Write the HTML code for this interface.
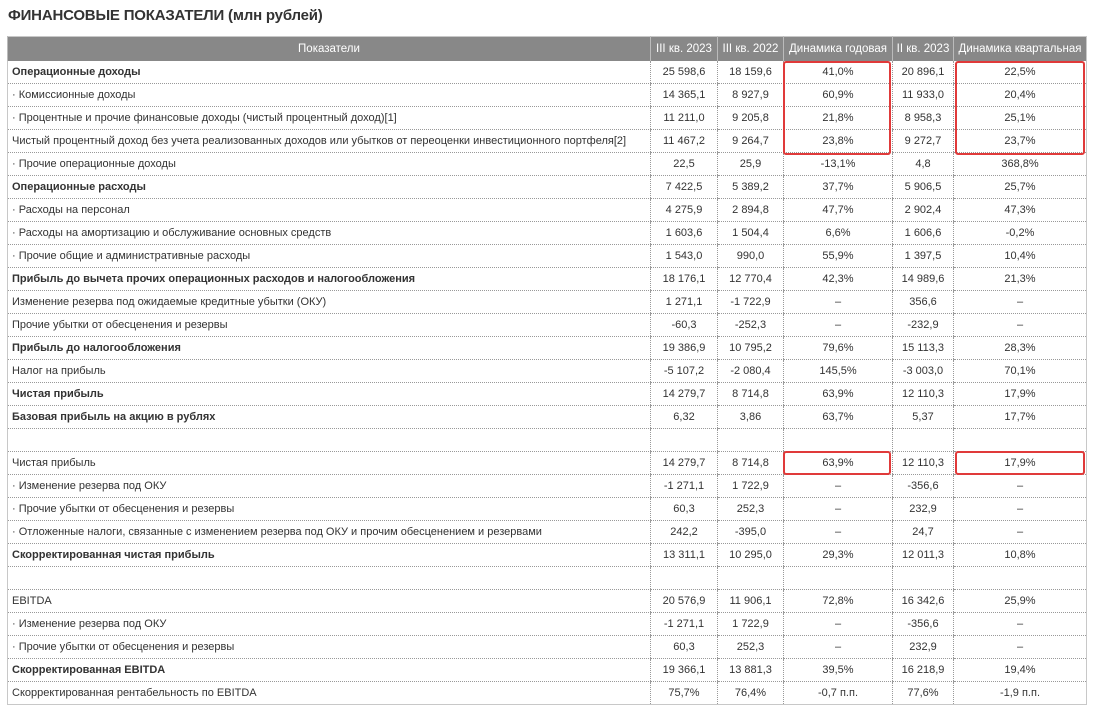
<!DOCTYPE html>
<html><head><meta charset="utf-8"><style>
body{margin:0;background:#fff;font-family:"Liberation Sans",Arial,sans-serif;color:#333;width:1095px;height:714px;position:relative;overflow:hidden}
h1{position:absolute;left:8px;top:7px;margin:0;font-size:15px;font-weight:bold;color:#333;letter-spacing:-0.2px}
table{position:absolute;left:7px;top:36px;border-collapse:collapse;table-layout:fixed;width:1079px;font-size:11px;border:1px solid #c8c8c8}
th{background:#888;color:#fff;font-weight:normal;height:24px;padding:0;border-left:1px solid #bbb;font-size:11.5px}
td{height:22px;padding:0 4px;border-bottom:1px dotted #999;border-left:1px dotted #999;text-align:center;white-space:nowrap;overflow:hidden}
td:first-child{text-align:left;border-left:none}
tr.b td:first-child{font-weight:bold}
.box{position:absolute;border:2px solid #e03a3a;border-radius:3px}
</style></head><body>
<h1>ФИНАНСОВЫЕ ПОКАЗАТЕЛИ (млн рублей)</h1>
<table>
<colgroup><col style="width:643px"><col style="width:67px"><col style="width:66px"><col style="width:109px"><col style="width:61px"><col style="width:133px"></colgroup>
<tr><th>Показатели</th><th>III кв. 2023</th><th>III кв. 2022</th><th>Динамика годовая</th><th>II кв. 2023</th><th>Динамика квартальная</th></tr>
<tr class="b"><td>Операционные доходы</td><td>25 598,6</td><td>18 159,6</td><td>41,0%</td><td>20 896,1</td><td>22,5%</td></tr>
<tr><td>· Комиссионные доходы</td><td>14 365,1</td><td>8 927,9</td><td>60,9%</td><td>11 933,0</td><td>20,4%</td></tr>
<tr><td>· Процентные и прочие финансовые доходы (чистый процентный доход)[1]</td><td>11 211,0</td><td>9 205,8</td><td>21,8%</td><td>8 958,3</td><td>25,1%</td></tr>
<tr><td>Чистый процентный доход без учета реализованных доходов или убытков от переоценки инвестиционного портфеля[2]</td><td>11 467,2</td><td>9 264,7</td><td>23,8%</td><td>9 272,7</td><td>23,7%</td></tr>
<tr><td>· Прочие операционные доходы</td><td>22,5</td><td>25,9</td><td>-13,1%</td><td>4,8</td><td>368,8%</td></tr>
<tr class="b"><td>Операционные расходы</td><td>7 422,5</td><td>5 389,2</td><td>37,7%</td><td>5 906,5</td><td>25,7%</td></tr>
<tr><td>· Расходы на персонал</td><td>4 275,9</td><td>2 894,8</td><td>47,7%</td><td>2 902,4</td><td>47,3%</td></tr>
<tr><td>· Расходы на амортизацию и обслуживание основных средств</td><td>1 603,6</td><td>1 504,4</td><td>6,6%</td><td>1 606,6</td><td>-0,2%</td></tr>
<tr><td>· Прочие общие и административные расходы</td><td>1 543,0</td><td>990,0</td><td>55,9%</td><td>1 397,5</td><td>10,4%</td></tr>
<tr class="b"><td>Прибыль до вычета прочих операционных расходов и налогообложения</td><td>18 176,1</td><td>12 770,4</td><td>42,3%</td><td>14 989,6</td><td>21,3%</td></tr>
<tr><td>Изменение резерва под ожидаемые кредитные убытки (ОКУ)</td><td>1 271,1</td><td>-1 722,9</td><td>–</td><td>356,6</td><td>–</td></tr>
<tr><td>Прочие убытки от обесценения и резервы</td><td>-60,3</td><td>-252,3</td><td>–</td><td>-232,9</td><td>–</td></tr>
<tr class="b"><td>Прибыль до налогообложения</td><td>19 386,9</td><td>10 795,2</td><td>79,6%</td><td>15 113,3</td><td>28,3%</td></tr>
<tr><td>Налог на прибыль</td><td>-5 107,2</td><td>-2 080,4</td><td>145,5%</td><td>-3 003,0</td><td>70,1%</td></tr>
<tr class="b"><td>Чистая прибыль</td><td>14 279,7</td><td>8 714,8</td><td>63,9%</td><td>12 110,3</td><td>17,9%</td></tr>
<tr class="b"><td>Базовая прибыль на акцию в рублях</td><td>6,32</td><td>3,86</td><td>63,7%</td><td>5,37</td><td>17,7%</td></tr>
<tr><td></td><td></td><td></td><td></td><td></td><td></td></tr>
<tr><td>Чистая прибыль</td><td>14 279,7</td><td>8 714,8</td><td>63,9%</td><td>12 110,3</td><td>17,9%</td></tr>
<tr><td>· Изменение резерва под ОКУ</td><td>-1 271,1</td><td>1 722,9</td><td>–</td><td>-356,6</td><td>–</td></tr>
<tr><td>· Прочие убытки от обесценения и резервы</td><td>60,3</td><td>252,3</td><td>–</td><td>232,9</td><td>–</td></tr>
<tr><td>· Отложенные налоги, связанные с изменением резерва под ОКУ и прочим обесценением и резервами</td><td>242,2</td><td>-395,0</td><td>–</td><td>24,7</td><td>–</td></tr>
<tr class="b"><td>Скорректированная чистая прибыль</td><td>13 311,1</td><td>10 295,0</td><td>29,3%</td><td>12 011,3</td><td>10,8%</td></tr>
<tr><td></td><td></td><td></td><td></td><td></td><td></td></tr>
<tr><td>EBITDA</td><td>20 576,9</td><td>11 906,1</td><td>72,8%</td><td>16 342,6</td><td>25,9%</td></tr>
<tr><td>· Изменение резерва под ОКУ</td><td>-1 271,1</td><td>1 722,9</td><td>–</td><td>-356,6</td><td>–</td></tr>
<tr><td>· Прочие убытки от обесценения и резервы</td><td>60,3</td><td>252,3</td><td>–</td><td>232,9</td><td>–</td></tr>
<tr class="b"><td>Скорректированная EBITDA</td><td>19 366,1</td><td>13 881,3</td><td>39,5%</td><td>16 218,9</td><td>19,4%</td></tr>
<tr><td>Скорректированная рентабельность по EBITDA</td><td>75,7%</td><td>76,4%</td><td>-0,7 п.п.</td><td>77,6%</td><td>-1,9 п.п.</td></tr>
</table>
<div class="box" style="left:783px;top:61px;width:104px;height:90px"></div>
<div class="box" style="left:955px;top:61px;width:126px;height:90px"></div>
<div class="box" style="left:783px;top:451px;width:104px;height:20px"></div>
<div class="box" style="left:955px;top:451px;width:126px;height:20px"></div>
</body></html>
